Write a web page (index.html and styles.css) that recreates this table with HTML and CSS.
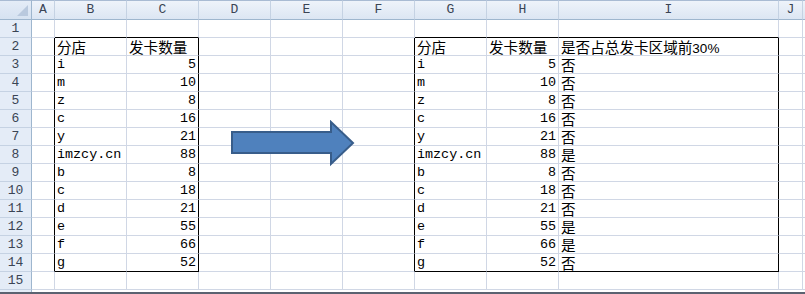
FILE: index.html
```html
<!DOCTYPE html>
<html lang="zh-CN">
<head>
<meta charset="utf-8">
<title>Sheet</title>
<link rel="stylesheet" href="styles.css">
</head>
<body>
<div class="wrap">
  <div class="sheet">
    <div class="c corner"><span class="tri"></span></div>
    <div class="c ch">A</div><div class="c ch">B</div><div class="c ch">C</div><div class="c ch">D</div><div class="c ch">E</div><div class="c ch">F</div><div class="c ch">G</div><div class="c ch">H</div><div class="c ch">I</div><div class="c ch">J</div><div class="c ch"></div>

    <div class="c rh">1</div><div class="c"></div><div class="c bb"></div><div class="c bb"></div><div class="c"></div><div class="c"></div><div class="c"></div><div class="c bb"></div><div class="c bb"></div><div class="c bb"></div><div class="c"></div><div class="c"></div>

    <div class="c rh">2</div><div class="c br"></div><div class="c"><span class="zh">分店</span></div><div class="c br"><span class="zh">发卡数量</span></div><div class="c"></div><div class="c"></div><div class="c br"></div><div class="c"><span class="zh">分店</span></div><div class="c"><span class="zh">发卡数量</span></div><div class="c br"><span class="zh">是否占总发卡区域前</span><span class="pct">30%</span></div><div class="c"></div><div class="c"></div>

    <div class="c rh">3</div><div class="c br"></div><div class="c">i</div><div class="c br num">5</div><div class="c"></div><div class="c"></div><div class="c br"></div><div class="c">i</div><div class="c num">5</div><div class="c br"><span class="zh">否</span></div><div class="c"></div><div class="c"></div>

    <div class="c rh">4</div><div class="c br"></div><div class="c">m</div><div class="c br num">10</div><div class="c"></div><div class="c"></div><div class="c br"></div><div class="c">m</div><div class="c num">10</div><div class="c br"><span class="zh">否</span></div><div class="c"></div><div class="c"></div>

    <div class="c rh">5</div><div class="c br"></div><div class="c">z</div><div class="c br num">8</div><div class="c"></div><div class="c"></div><div class="c br"></div><div class="c">z</div><div class="c num">8</div><div class="c br"><span class="zh">否</span></div><div class="c"></div><div class="c"></div>

    <div class="c rh">6</div><div class="c br"></div><div class="c">c</div><div class="c br num">16</div><div class="c"></div><div class="c"></div><div class="c br"></div><div class="c">c</div><div class="c num">16</div><div class="c br"><span class="zh">否</span></div><div class="c"></div><div class="c"></div>

    <div class="c rh">7</div><div class="c br"></div><div class="c">y</div><div class="c br num">21</div><div class="c"></div><div class="c"></div><div class="c br"></div><div class="c">y</div><div class="c num">21</div><div class="c br"><span class="zh">否</span></div><div class="c"></div><div class="c"></div>

    <div class="c rh">8</div><div class="c br"></div><div class="c">imzcy.cn</div><div class="c br num">88</div><div class="c"></div><div class="c"></div><div class="c br"></div><div class="c">imzcy.cn</div><div class="c num">88</div><div class="c br"><span class="zh">是</span></div><div class="c"></div><div class="c"></div>

    <div class="c rh">9</div><div class="c br"></div><div class="c">b</div><div class="c br num">8</div><div class="c"></div><div class="c"></div><div class="c br"></div><div class="c">b</div><div class="c num">8</div><div class="c br"><span class="zh">否</span></div><div class="c"></div><div class="c"></div>

    <div class="c rh">10</div><div class="c br"></div><div class="c">c</div><div class="c br num">18</div><div class="c"></div><div class="c"></div><div class="c br"></div><div class="c">c</div><div class="c num">18</div><div class="c br"><span class="zh">否</span></div><div class="c"></div><div class="c"></div>

    <div class="c rh">11</div><div class="c br"></div><div class="c">d</div><div class="c br num">21</div><div class="c"></div><div class="c"></div><div class="c br"></div><div class="c">d</div><div class="c num">21</div><div class="c br"><span class="zh">否</span></div><div class="c"></div><div class="c"></div>

    <div class="c rh">12</div><div class="c br"></div><div class="c">e</div><div class="c br num">55</div><div class="c"></div><div class="c"></div><div class="c br"></div><div class="c">e</div><div class="c num">55</div><div class="c br"><span class="zh">是</span></div><div class="c"></div><div class="c"></div>

    <div class="c rh">13</div><div class="c br"></div><div class="c">f</div><div class="c br num">66</div><div class="c"></div><div class="c"></div><div class="c br"></div><div class="c">f</div><div class="c num">66</div><div class="c br"><span class="zh">是</span></div><div class="c"></div><div class="c"></div>

    <div class="c rh">14</div><div class="c br"></div><div class="c bb">g</div><div class="c br bb num">52</div><div class="c"></div><div class="c"></div><div class="c br"></div><div class="c bb">g</div><div class="c bb num">52</div><div class="c br bb"><span class="zh">否</span></div><div class="c"></div><div class="c"></div>

    <div class="c rh">15</div><div class="c"></div><div class="c"></div><div class="c"></div><div class="c"></div><div class="c"></div><div class="c"></div><div class="c"></div><div class="c"></div><div class="c"></div><div class="c"></div><div class="c"></div>
  </div>
  <div class="stub"></div>
  <div class="scroll"></div>

  <svg class="arrow" width="126" height="48" viewBox="0 0 126 48">
    <polygon points="2,12 101,12 101,2 123,23 101,44 101,33 2,33" fill="#4f81bd" stroke="#385d8a" stroke-width="2" stroke-linejoin="miter"/>
  </svg>
</div>
</body>
</html>
```

FILE: styles.css
```css
html, body {
  margin: 0;
  padding: 0;
  background: #ffffff;
  overflow: hidden;
}

.wrap {
  position: relative;
  width: 805px;
  height: 294px;
  overflow: hidden;
}

.sheet {
  display: grid;
  grid-template-columns: 32px 23px repeat(7, 72px) 220px 24px 40px;
  grid-template-rows: 20px;
  grid-auto-rows: 18px;
  font-family: "Liberation Mono", "Noto Sans CJK SC", monospace;
  font-size: 13.4px;
  color: #000;
}

.c {
  box-sizing: border-box;
  border-right: 1px solid #d0d7e5;
  border-bottom: 1px solid #d0d7e5;
  padding: 0 2px;
  line-height: 17px;
  white-space: nowrap;
  height: 100%;
}

.ch {
  background: linear-gradient(#eef3fa, #dce6f3);
  border-top: 1px solid #a9bbd3;
  border-right: 1px solid #c5d2e3;
  border-bottom: 1px solid #9eb6ce;
  text-align: center;
  color: #3a4454;
  line-height: 18px;
  font-size: 13px;
}

.corner {
  position: relative;
  background: linear-gradient(#e4ecf7, #d6e2f1);
  border-top: 1px solid #a9bbd3;
  border-right: 1px solid #9eb6ce;
  border-bottom: 1px solid #9eb6ce;
}

.tri {
  position: absolute;
  right: 3px;
  bottom: 3px;
  width: 0;
  height: 0;
  border-left: 11px solid transparent;
  border-bottom: 11px solid #b9c9de;
}

.rh {
  background: #e4ecf7;
  border-right: 1px solid #9eb6ce;
  border-bottom: 1px solid #c5d2e3;
  text-align: center;
  color: #3a4454;
  font-size: 13px;
  line-height: 18px;
}

.num {
  text-align: right;
}

.zh {
  font-family: "Noto Sans CJK SC", sans-serif;
  font-size: 14.6px;
  line-height: 17px;
}

.pct {
  font-family: "Liberation Sans", sans-serif;
  font-size: 13.5px;
  line-height: 17px;
}

.br {
  border-right-color: #000;
}

.bb {
  border-bottom-color: #000;
}

.stub {
  width: 32px;
  height: 2px;
  background: #e4ecf7;
  border-right: 1px solid #9eb6ce;
  box-sizing: border-box;
}

.scroll {
  height: 10px;
  border-top: 2px solid #5b6270;
  background: #eef1f5;
}

.arrow {
  position: absolute;
  left: 230px;
  top: 120px;
}
```
